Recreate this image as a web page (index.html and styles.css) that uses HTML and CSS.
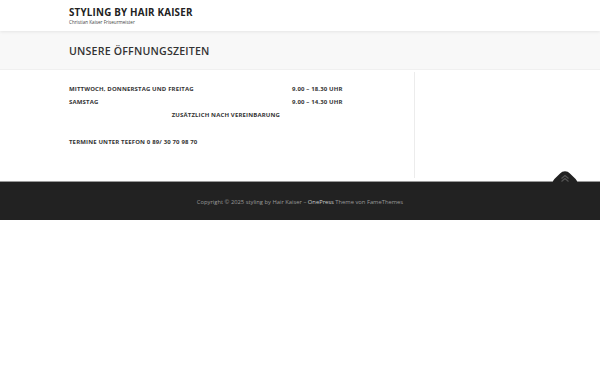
FILE: index.html
```html
<html>
  <head>
    <title>Öffnungszeiten – styling by Hair Kaiser</title>
    <link rel="stylesheet" href="styles.css">
  </head>
  <body>
    <header class="site-header">
      <div class="container">
        <div class="site-title">STYLING BY HAIR KAISER</div>
        <div class="site-description">Christian Kaiser Friseurmeister</div>
      </div>
    </header>
    <div class="page-header">
      <div class="container">
        <h1 class="entry-title">UNSERE ÖFFNUNGSZEITEN</h1>
      </div>
    </div>
    <div class="content">
      <div class="container content-inner">
        <main class="primary">
          <div class="hours">
            <div>MITTWOCH, DONNERSTAG UND FREITAG</div>
            <div>9.00 – 18.30 UHR</div>
            <div>SAMSTAG</div>
            <div>9.00 – 14.30 UHR</div>
            <div class="extra">ZUSÄTZLICH NACH VEREINBARUNG</div>
            <div></div>
          </div>
          <p class="phone">TERMINE UNTER TEEFON 0 89/ 30 70 98 70</p>
        </main>
        <aside class="sidebar"></aside>
      </div>
    </div>
    <footer class="site-footer">
      <div class="back-to-top">
        <svg width="10" height="8" viewBox="0 0 10 8">
          <path d="M1.5 4.5 L5 1.5 L8.5 4.5 M1.5 7.5 L5 4.5 L8.5 7.5" fill="none" stroke="#555" stroke-width="1.2"/>
        </svg>
      </div>
      <div class="site-info">
        Copyright © 2025 styling by Hair Kaiser – <span class="theme">OnePress</span> Theme von FameThemes
      </div>
    </footer>
  </body>
</html>
```

FILE: styles.css
```css
body {
  margin: 0;
  font-family: "Open Sans", sans-serif;
  color: #333;
  background: #fff;
}

.container {
  width: 462px;
  margin: 0 0 0 69px;
}

/* header */
.site-header {
  height: 31px;
  background: #fff;
  box-shadow: 0 1px 3px rgba(0, 0, 0, 0.08);
  position: relative;
  z-index: 2;
}
.site-header .container {
  padding-top: 7px;
}
.site-title {
  font-size: 9.8px;
  font-weight: 700;
  letter-spacing: 0.2px;
  line-height: 12px;
  color: #222;
}
.site-description {
  font-size: 4.6px;
  line-height: 7px;
  color: #444;
}

/* page title band */
.page-header {
  height: 39px;
  background: #f8f8f8;
  border-bottom: 1px solid #f0f0f0;
  box-sizing: border-box;
}
.entry-title {
  margin: 0;
  padding-top: 13px;
  font-size: 10.6px;
  font-weight: 600;
  letter-spacing: 0.2px;
  line-height: 14px;
  color: #333;
}

/* content */
.content-inner {
  display: flex;
  height: 111px;
}
.primary {
  width: 345px;
  padding-top: 14px;
  border-right: 1px solid #ececec;
  margin: 2px 0 3px;
}
.hours {
  display: grid;
  grid-template-columns: 223px 1fr;
  row-gap: 6px;
  font-size: 6px;
  font-weight: 700;
  letter-spacing: 0.15px;
  line-height: 7px;
  color: #333;
}
.hours .extra {
  text-align: right;
  padding-right: 12px;
}
.phone {
  margin: 20px 0 0;
  font-size: 6px;
  font-weight: 700;
  letter-spacing: 0.15px;
  line-height: 7px;
  color: #333;
}

/* footer */
.site-footer {
  position: relative;
  height: 38px;
  background: #222;
  border-top: 1px solid #999;
  display: flex;
  align-items: center;
  justify-content: center;
}
.site-info {
  font-size: 5.8px;
  color: #9a9a9a;
  padding-top: 2px;
}
.site-info .theme {
  color: #ccc;
}
.back-to-top {
  position: absolute;
  left: 550px;
  top: -12px;
  width: 30px;
  height: 14px;
  overflow: hidden;
  display: flex;
  justify-content: center;
}
.back-to-top::before {
  content: "";
  position: absolute;
  left: 4px;
  top: 3px;
  width: 22px;
  height: 22px;
  background: #222;
  border-radius: 7px;
  transform: rotate(45deg);
}
.back-to-top svg {
  position: relative;
  margin-top: 4px;
}
```
